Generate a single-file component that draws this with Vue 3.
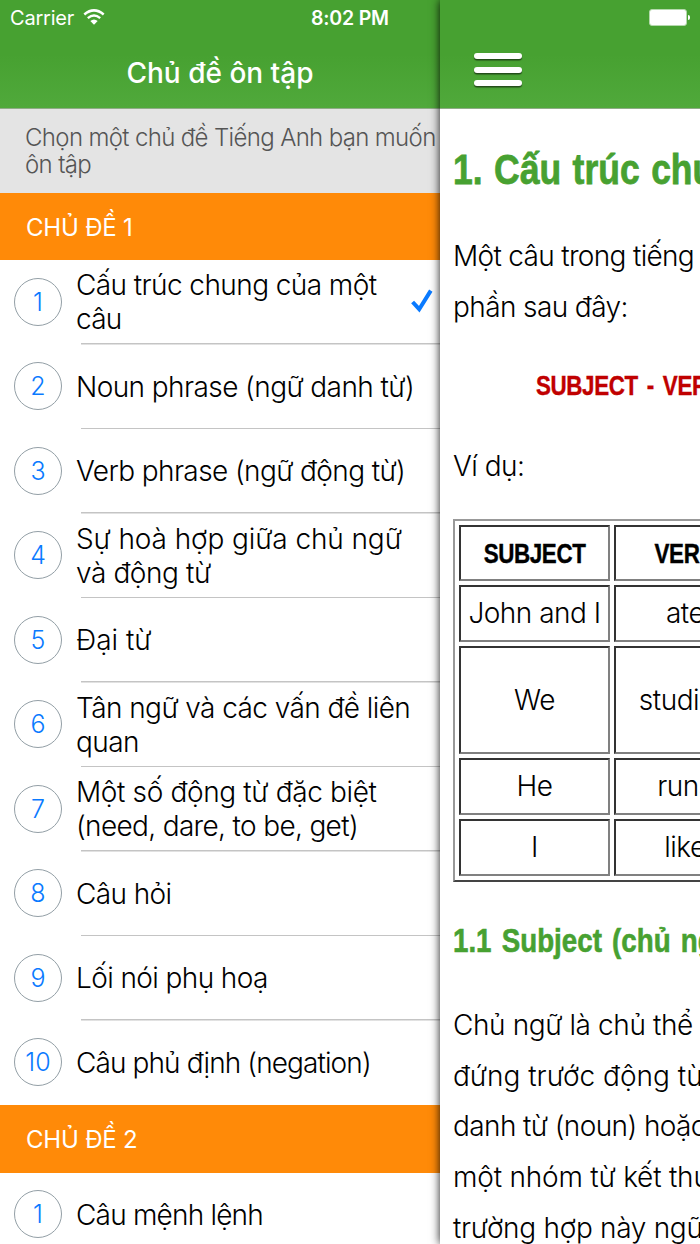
<script setup>
// track: letter spacing of a line in px
const sections = [
  {
    title: 'CHỦ ĐỀ 1',
    items: [
      {
        lines: [
          { text: 'Cấu trúc chung của một', track: -0.58 },
          { text: 'câu', track: -0.8 }
        ],
        checked: true
      },
      { lines: [{ text: 'Noun phrase (ngữ danh từ)', track: -0.58 }] },
      { lines: [{ text: 'Verb phrase (ngữ động từ)', track: -0.6 }] },
      {
        lines: [
          { text: 'Sự hoà hợp giữa chủ ngữ', track: -0.1 },
          { text: 'và động từ', track: -0.4 }
        ]
      },
      { lines: [{ text: 'Đại từ', track: 0 }] },
      {
        lines: [
          { text: 'Tân ngữ và các vấn đề liên', track: -0.57 },
          { text: 'quan', track: -0.6 }
        ]
      },
      {
        lines: [
          { text: 'Một số động từ đặc biệt', track: -0.36 },
          { text: '(need, dare, to be, get)', track: -0.66 }
        ]
      },
      { lines: [{ text: 'Câu hỏi', track: -0.6 }] },
      { lines: [{ text: 'Lối nói phụ hoạ', track: -0.6 }] },
      { lines: [{ text: 'Câu phủ định (negation)', track: -0.9 }] }
    ]
  },
  {
    title: 'CHỦ ĐỀ 2',
    items: [{ lines: [{ text: 'Câu mệnh lệnh', track: -0.8 }] }]
  }
]

const rows = [
  { subject: 'John and I', verb: 'ate' },
  { subject: 'We', verb: 'studied', tall: true },
  { subject: 'He', verb: 'runs' },
  { subject: 'I', verb: 'like' }
]

const lead = [
  { text: 'Một câu trong tiếng', track: -0.68 },
  { text: 'phần sau đây:', track: -0.6 }
]

const paragraph = [
  { text: 'Chủ ngữ là chủ thể', track: -0.4 },
  { text: 'đứng trước động từ', track: 0 },
  { text: 'danh từ (noun) hoặc', track: -0.6 },
  { text: 'một nhóm từ kết thúc', track: -0.2 },
  { text: 'trường hợp này ngữ', track: -0.3 }
]
</script>

<template>
  <div class="screen">
    <aside class="menu">
      <header class="bar">
        <div class="status">
          <span class="carrier">Carrier</span>
          <svg class="wifi" width="22" height="17" viewBox="0 0 22 17">
            <path d="M1.3 5.5 Q11 -2.7 20.7 5.5" fill="none" stroke="#fff" stroke-width="2.5" />
            <path d="M4.8 9.2 Q11 4 17.2 9.2" fill="none" stroke="#fff" stroke-width="2.4" />
            <path d="M7.3 12 Q11 8.9 14.7 12 L11 15.7 Z" fill="#fff" />
          </svg>
          <span class="time">8:02 PM</span>
        </div>
        <h1>Chủ đề ôn tập</h1>
      </header>

      <p class="intro">Chọn một chủ đề Tiếng Anh bạn muốn<br />ôn tập</p>

      <section v-for="section in sections" :key="section.title">
        <h2>{{ section.title }}</h2>
        <ul>
          <li v-for="(item, i) in section.items" :key="i">
            <span class="num">{{ i + 1 }}</span>
            <div class="label">
              <span
                v-for="line in item.lines"
                :key="line.text"
                :style="{ letterSpacing: line.track + 'px' }"
              >{{ line.text }}</span>
            </div>
            <svg v-if="item.checked" class="check" width="22" height="24" viewBox="0 0 22 24">
              <path d="M1.6 13 L8.2 20.2 L19.8 1.6" fill="none" stroke="#0a7aff" stroke-width="4" />
            </svg>
          </li>
        </ul>
      </section>
    </aside>

    <main class="page">
      <header class="bar page-bar">
        <div class="burger"><i></i><i></i><i></i></div>
        <div class="battery"><i></i></div>
      </header>

      <article>
        <h3><span class="narrow">1. Cấu trúc chung</span></h3>
        <p class="lines">
          <span
            v-for="line in lead"
            :key="line.text"
            :style="{ letterSpacing: line.track + 'px' }"
          >{{ line.text }}</span>
        </p>
        <p class="formula"><span class="narrow">SUBJECT - VERB</span></p>
        <p class="example">Ví dụ:</p>

        <table>
          <tbody>
            <tr>
              <th><span class="narrow">SUBJECT</span></th>
              <th><span class="narrow">VERB</span></th>
            </tr>
            <tr v-for="row in rows" :key="row.subject" :class="{ tall: row.tall }">
              <td>{{ row.subject }}</td>
              <td>{{ row.verb }}</td>
            </tr>
          </tbody>
        </table>

        <h4><span class="narrow">1.1 Subject (chủ ngữ)</span></h4>
        <p class="lines">
          <span
            v-for="line in paragraph"
            :key="line.text"
            :style="{ letterSpacing: line.track + 'px' }"
          >{{ line.text }}</span>
        </p>
      </article>
    </main>
  </div>
</template>

<style>
body {
  margin: 0;
  background: #fff;
}
</style>

<style scoped>
.screen {
  display: flex;
  width: 700px;
  height: 1244px;
  overflow: hidden;
  background: #fff;
  color: #000;
  font-family: Inter, "Liberation Sans", sans-serif;
  font-weight: 300;
}
h1, h2, h3, h4, p, ul {
  margin: 0;
  padding: 0;
}
.bar {
  box-sizing: border-box;
  height: 109px;
  background: linear-gradient(#47a131 50%, #50a93b);
  border-bottom: 1px solid #8fab87;
  color: #fff;
}

/* Left menu */
.menu {
  flex: none;
  width: 440px;
  height: 1244px;
  overflow: hidden;
}
.status {
  display: flex;
  align-items: center;
  height: 36px;
  padding-left: 10px;
  font-size: 20px;
}
.carrier {
  width: 64px;
  white-space: nowrap;
  font-weight: 400;
  letter-spacing: -0.2px;
}
.wifi {
  margin: -1px 0 0 9px;
}
.time {
  width: 80px;
  margin-left: 206px;
  font-size: 19.5px;
  font-weight: 600;
  letter-spacing: -0.2px;
  white-space: nowrap;
}
h1 {
  height: 72px;
  line-height: 74px;
  text-align: center;
  font-size: 28px;
  font-weight: 500;
  letter-spacing: 0;
}
.intro {
  box-sizing: border-box;
  height: 83.5px;
  padding: 15px 0 0 25px;
  background: #e4e4e4;
  color: #555;
  font-size: 24px;
  line-height: 27.3px;
  letter-spacing: -0.65px;
  white-space: nowrap;
}
h2 {
  height: 67.5px;
  padding-left: 26px;
  background: #ff8a08;
  color: #fff;
  font-size: 24px;
  font-weight: 400;
  letter-spacing: -0.2px;
  line-height: 69px;
}
ul {
  list-style: none;
}
li {
  display: flex;
  align-items: center;
  height: 84.5px;
  padding-left: 14px;
  background: linear-gradient(#c4c4c4, #c4c4c4) 81px 100% / 100% 1.5px no-repeat;
}
li:last-child {
  background: none;
}
.num {
  box-sizing: border-box;
  flex: none;
  width: 48px;
  height: 48px;
  border: 1px solid #939fa6;
  border-radius: 50%;
  color: #0a7aff;
  font-size: 25px;
  line-height: 46px;
  text-align: center;
  margin-top: -1px;
}
.label {
  flex: none;
  width: 335px;
  padding-left: 14px;
  font-size: 28px;
  line-height: 34px;
  white-space: nowrap;
}
.label span, .lines span {
  display: block;
}
.check {
  flex: none;
  margin-top: -2px;
}

/* Right page, sliding over the menu */
.page {
  position: relative;
  flex: none;
  width: 260px;
  height: 1244px;
  background: #fff;
  box-shadow: 0 0 9px rgba(0, 0, 0, 0.9);
}
.page-bar {
  display: flex;
  justify-content: space-between;
  padding-left: 34px;
}
.burger {
  display: flex;
  flex-direction: column;
  gap: 7.5px;
  padding-top: 53px;
}
.burger i {
  width: 48px;
  height: 6px;
  border-radius: 3px;
  background: #fff;
  box-shadow: 0 1.5px 1px rgba(0, 0, 0, 0.55);
}
.battery {
  position: relative;
  box-sizing: border-box;
  width: 38px;
  height: 17px;
  margin: 9px 13px 0 0;
  border: 1px solid #b5d9ad;
  border-radius: 3px;
  background: #fff;
}
.battery i {
  position: absolute;
  right: -4px;
  top: 5px;
  width: 2px;
  height: 5px;
  border-radius: 0 2px 2px 0;
  background: #fff;
}
article {
  height: 1135px;
  padding-left: 13px;
  overflow: hidden;
  white-space: nowrap;
}
.narrow {
  display: inline-block;
  transform: scaleX(0.8);
  transform-origin: 0 50%;
  font-family: "Liberation Sans", Arial, sans-serif;
  font-weight: 700;
  -webkit-text-stroke: 0.4px;
}
h3 {
  height: 122px;
  color: #47a131;
  font-size: 43px;
  line-height: 119px;
}
h3 .narrow {
  transform: scaleX(0.825);
  word-spacing: 2px;
  -webkit-text-stroke: 0.8px;
}
p {
  font-size: 28px;
  line-height: 50.7px;
  letter-spacing: -0.5px;
}
.formula {
  padding: 28px 0 0 83px;
  color: #c00000;
}
.formula .narrow {
  word-spacing: 4px;
}
.example {
  padding: 29px 0 27px;
}
table {
  width: 309px;
  border: 2px solid;
  border-color: #999 #444 #444 #999;
  border-collapse: separate;
  border-spacing: 4px;
  table-layout: fixed;
}
th, td {
  box-sizing: border-box;
  width: 151px;
  height: 57px;
  padding: 0;
  border: 2px solid;
  border-color: #333 #808080 #808080 #333;
  font-size: 28px;
  letter-spacing: -0.5px;
  text-align: center;
}
th {
  height: 56px;
}
th .narrow {
  transform-origin: 50% 50%;
}
th + th, td + td {
  width: 142px;
}
.tall td {
  height: 108px;
}
h4 {
  height: 118px;
  color: #47a131;
  font-size: 33px;
  line-height: 116px;
}
h4 .narrow {
  transform: scaleX(0.84);
  word-spacing: 3px;
  -webkit-text-stroke: 0.6px;
}
</style>
